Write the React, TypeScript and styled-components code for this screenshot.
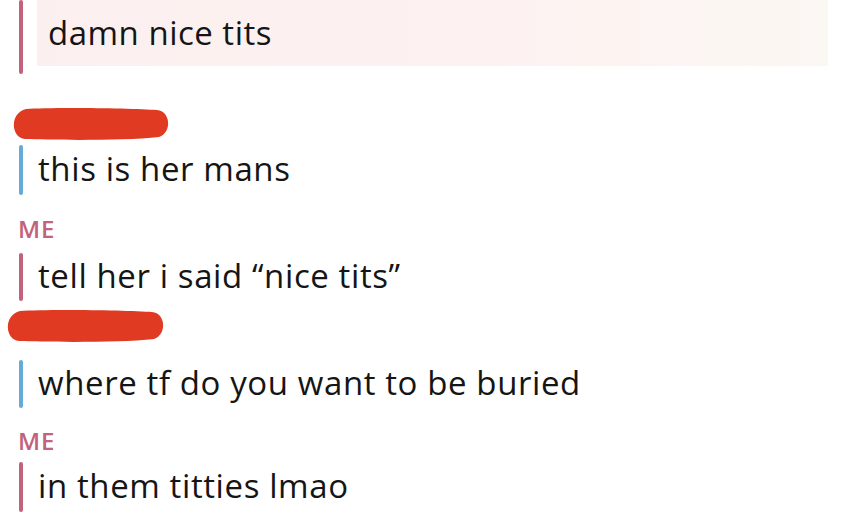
import React from "react";
import styled, { createGlobalStyle } from "styled-components";

const GlobalStyle = createGlobalStyle`
	html, body {
		margin: 0;
		padding: 0;
		background: #ffffff;
	}
	body {
		font-family: "Open Sans", Lato, sans-serif;
		color: #151515;
		font-variant-ligatures: none;
	}
`;

const PINK = "#c2627c";
const BLUE = "#64abd9";

const Screen = styled.div`
	width: 861px;
	height: 527px;
	overflow: hidden;
	display: flex;
	flex-direction: column;
`;

const QuotedRow = styled.div`
	display: flex;
	align-items: flex-start;
	padding-left: 19px;
	height: 74px;
	flex: none;
`;

const Bar = styled.div<{ $color: string; $h: number }>`
	width: 4px;
	height: ${p => p.$h}px;
	border-radius: 2px;
	background: ${p => p.$color};
	flex: none;
`;

const QuoteBox = styled.div`
	margin-left: 14px;
	width: 791px;
	height: 66px;
	background: linear-gradient(90deg, #fcefef 0%, #fdf2f1 60%, #fbf7f3 100%);
	display: flex;
	align-items: center;
	padding-left: 11px;
	box-sizing: border-box;
	font-size: 33px;
	letter-spacing: 0.5px;
	padding-bottom: 2px;
`;

const Name = styled.div<{ $top: number }>`
	height: 24px;
	flex: none;
	margin-top: ${p => p.$top}px;
	padding-left: 18px;
	font-size: 24px;
	line-height: 24px;
	font-weight: 600;
	color: ${PINK};
	letter-spacing: 0.8px;
`;

const Scribble = styled.svg<{ $top: number; $left: number }>`
	display: block;
	margin-top: ${p => p.$top}px;
	margin-left: ${p => p.$left}px;
	flex: none;
`;

const MessageRow = styled.div<{ $top: number }>`
	display: flex;
	align-items: center;
	gap: 15px;
	padding-left: 19px;
	margin-top: ${p => p.$top}px;
	height: 50px;
	flex: none;
`;

const MessageText = styled.div`
	font-size: 33px;
	letter-spacing: 0.6px;
	line-height: 50px;
	white-space: nowrap;
	padding-bottom: 2px;
`;

const RedactedName = ({ top, left, width }: { top: number; left: number; width: number }) => (
	<Scribble $top={top} $left={left} width={width} height={34} viewBox={`0 0 ${width} 34`}>
		<path
			d={`M17 2 C40 0 ${width - 40} 1 ${width - 16} 3 C${width - 2} 4 ${width - 1} 26 ${width - 14} 30 C${width - 50} 34 40 33 16 32 C2 31 0 6 17 2 Z`}
			fill="#e03a22"
		/>
	</Scribble>
);

const App = () => {
	return (
		<Screen>
			<GlobalStyle />
			<QuotedRow>
				<Bar $color={PINK} $h={74} />
				<QuoteBox>damn nice tits</QuoteBox>
			</QuotedRow>

			<RedactedName top={33} left={9} width={164} />
			<MessageRow $top={4}>
				<Bar $color={BLUE} $h={50} />
				<MessageText>this is her mans</MessageText>
			</MessageRow>

			<Name $top={22}>ME</Name>
			<MessageRow $top={11}>
				<Bar $color={PINK} $h={48} />
				<MessageText>tell her i said “nice tits”</MessageText>
			</MessageRow>

			<RedactedName top={7} left={3} width={165} />
			<MessageRow $top={16}>
				<Bar $color={BLUE} $h={48} />
				<MessageText>where tf do you want to be buried</MessageText>
			</MessageRow>

			<Name $top={20}>ME</Name>
			<MessageRow $top={9}>
				<Bar $color={PINK} $h={50} />
				<MessageText>in them titties lmao</MessageText>
			</MessageRow>
		</Screen>
	);
};

export default App;
